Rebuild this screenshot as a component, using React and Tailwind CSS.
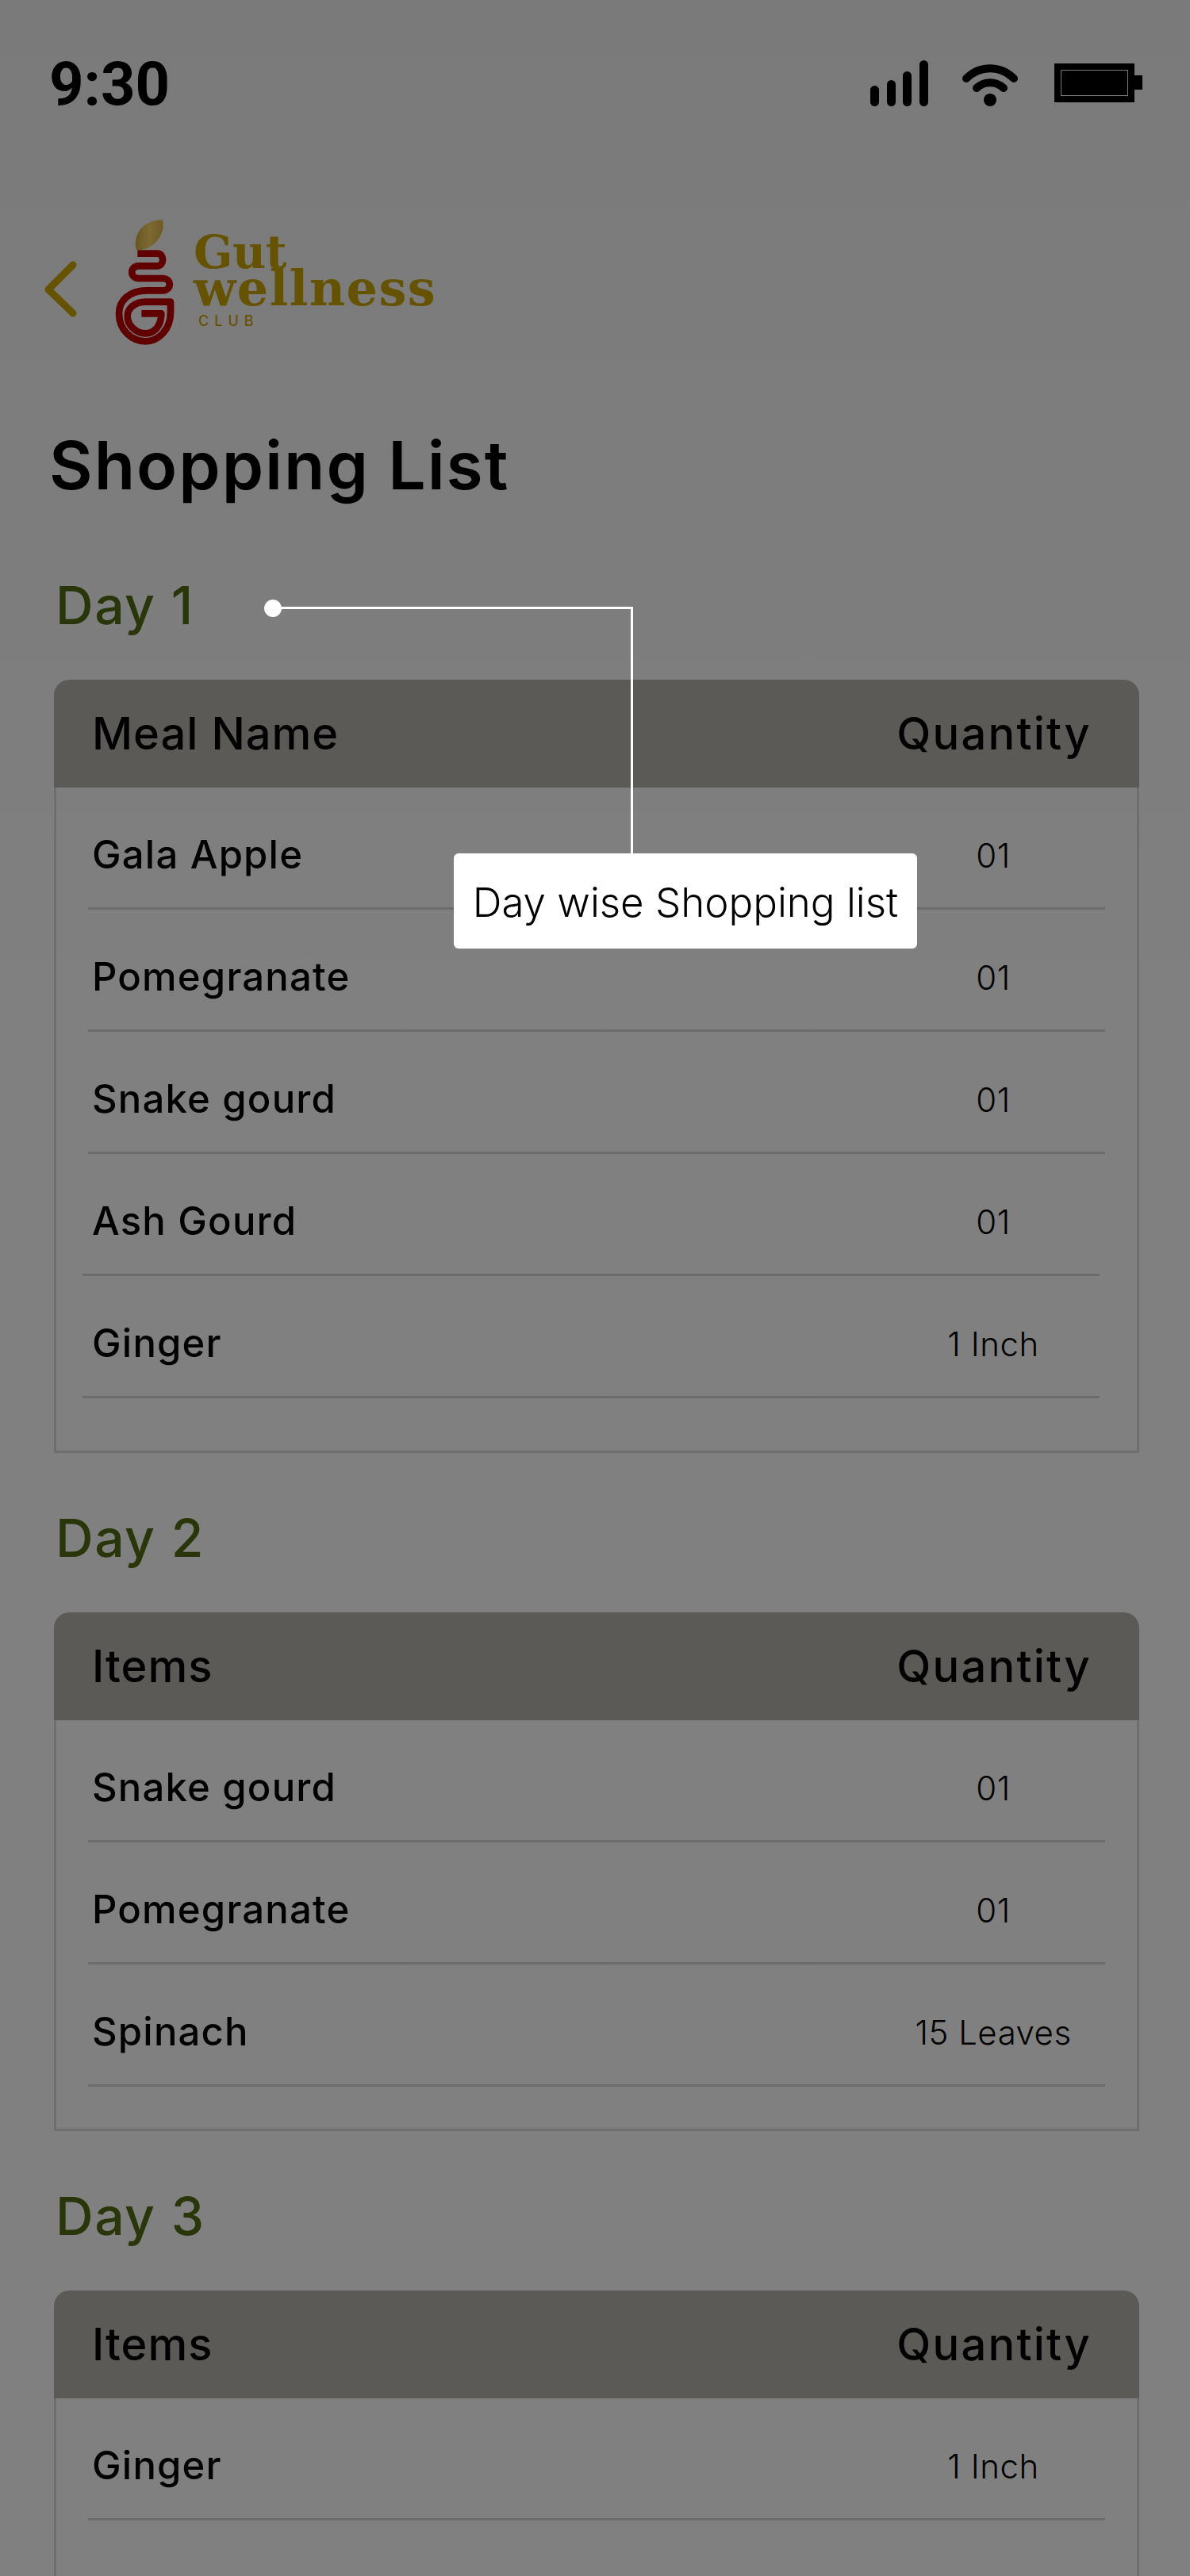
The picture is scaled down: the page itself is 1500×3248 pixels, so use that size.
const days = [
  {
    title: 'Day 1',
    head: 'Meal Name',
    pad: 'pb-[66px]',
    rows: [
      ['Gala Apple', '01'],
      ['Pomegranate', '01'],
      ['Snake gourd', '01'],
      ['Ash Gourd', '01', true],
      ['Ginger', '1 Inch', true],
    ],
  },
  {
    title: 'Day 2',
    head: 'Items',
    pad: 'pb-[53px]',
    rows: [
      ['Snake gourd', '01'],
      ['Pomegranate', '01'],
      ['Spinach', '15 Leaves'],
    ],
  },
  {
    title: 'Day 3',
    head: 'Items',
    pad: 'pb-[53px]',
    rows: [
      ['Ginger', '1 Inch'],
      ['Cucumber', '01', false, true],
    ],
  },
]

function StatusIcons() {
  return (
    <div className="flex items-end gap-[43px] mb-[8px]">
      <svg width="73" height="58" viewBox="0 0 73 58">
        <rect x="0" y="32" width="11" height="26" rx="5.5" />
        <rect x="21" y="25" width="11" height="33" rx="5.5" />
        <rect x="41" y="14" width="11" height="44" rx="5.5" />
        <rect x="62" y="0" width="11" height="58" rx="5.5" />
      </svg>
      <svg width="70" height="54" viewBox="0 0 70 54" fill="none" stroke="#000" strokeLinecap="round">
        <path d="M5 19 C22 2 48 2 65 19" strokeWidth="10" />
        <path d="M18 31 C28 22 42 22 52 31" strokeWidth="10" />
        <circle cx="35" cy="46" r="8" fill="#000" stroke="none" />
      </svg>
      <svg width="111" height="49" viewBox="0 0 111 49" className="mb-[5px] ml-[3px]">
        <path d="M0 0 H101 V15 H111 V33 H101 V49 H0 Z M8 8 V41 H93 V8 Z" fillRule="evenodd" />
        <rect x="9" y="9" width="83" height="31" />
      </svg>
    </div>
  )
}

function Logo() {
  return (
    <div className="flex items-start gap-[24px]">
      <svg width="75" height="158" viewBox="75 50 225 474" fill="none">
        <defs>
          <linearGradient id="leaf" x1="0" y1="0" x2="1" y2="0">
            <stop offset="0" stopColor="#695420" />
            <stop offset="0.5" stopColor="#7c6a32" />
            <stop offset="1" stopColor="#6d5a22" />
          </linearGradient>
        </defs>
        <path d="M255 51 C195 52 150 85 152 150 L156 165 C215 168 268 112 255 51 Z" fill="url(#leaf)" />
        <path
          d="M160 178 H235 C262 178 262 225 235 225 H165 C130 225 130 272 165 272 H255 C290 272 290 318 255 318 H195 C130 318 90 355 90 405 C90 470 140 510 190 510 C240 510 285 465 285 400 V361 H190 C150 361 122 385 122 415 C122 450 155 480 190 480 C225 480 250 450 250 405 H175"
          stroke="#600000"
          strokeWidth="26"
          strokeLinejoin="round"
        />
      </svg>
      <div className="mt-[18px] font-['DejaVu_Serif',serif] font-bold text-[#665300]">
        <div className="text-[58px] leading-[46px] -tracking-[0.5px]">Gut</div>
        <div className="text-[62px] leading-[46px] tracking-[1.5px]">wellness</div>
        <div className="font-['Inter',sans-serif] font-medium text-[18px] leading-[20px] tracking-[7px] ml-[6px] mt-[8px]">CLUB</div>
      </div>
    </div>
  )
}

function DayCard({ day }) {
  return (
    <section>
      <h2 className="text-[66px] leading-[76px] font-medium tracking-[1.5px] pl-[2px] text-[#28360a]">{day.title}</h2>
      <div className={`mt-[56px] border-x-[3px] border-b-[3px] border-[#6e6e6c] rounded-t-[20px] ${day.pad}`}>
        <div className="-mx-[3px] h-[136px] pl-[48px] pr-[60px] flex items-center justify-between bg-[#5b5a57] rounded-t-[20px] text-[56px] font-medium text-black">
          <span className="tracking-[1px]">{day.head}</span>
          <span className="tracking-[2.25px]">Quantity</span>
        </div>
        <div className="mx-[40px]">
          {day.rows.map(([name, qty, shifted, low]) => (
            <div
              key={name}
              className={`h-[154px] flex items-center justify-between border-b-[3px] border-[#6c6c6c] text-black ${low ? 'pt-[28px]' : 'pt-[19px]'} ${shifted ? '-ml-[7px] mr-[7px]' : ''}`}
            >
              <span className={`text-[49px] font-medium tracking-[1.2px] ${shifted ? 'pl-[12px]' : 'pl-[5px]'}`}>{name}</span>
              <span className={`text-center text-[42px] font-light tracking-[0.5px] ${shifted ? 'w-[268px]' : 'w-[282px]'}`}>{qty}</span>
            </div>
          ))}
        </div>
      </div>
    </section>
  )
}

export default function App() {
  return (
    <div className="relative h-[3248px] overflow-hidden bg-linear-to-b from-[#7a7a7a] to-[#808080] to-40% font-['Inter',sans-serif]">
      <div className="flex items-end justify-between pl-[62px] pr-[60px] pt-[70px]">
        <span className="font-['Roboto',sans-serif] font-bold text-[76px] leading-[72px]">9:30</span>
        <StatusIcons />
      </div>

      <div className="mt-[135px] pl-[56px] flex items-center gap-[48px]">
        <svg className="mt-[16px]" width="41" height="71" viewBox="0 0 41 71" fill="none" stroke="#665300" strokeWidth="9" strokeLinecap="round" strokeLinejoin="round">
          <path d="M36 5 L5 36 L36 66" />
        </svg>
        <Logo />
      </div>

      <h1 className="pl-[62px] mt-[104px] text-[84px] leading-[96px] font-semibold tracking-[2px] text-black">Shopping List</h1>

      <div className="mt-[90px] pl-[68px] pr-[64px] flex flex-col gap-[69px]">
        {days.map(day => (
          <DayCard key={day.title} day={day} />
        ))}
      </div>

      {/* callout over the first card */}
      <div className="absolute left-[333px] top-[756px] w-[22px] h-[22px] rounded-full bg-white" />
      <div className="absolute left-[344px] top-[765px] w-[453px] h-[3px] bg-white" />
      <div className="absolute left-[795px] top-[765px] w-[3px] h-[312px] bg-white" />
      <div className="absolute left-[572px] top-[1076px] w-[584px] h-[120px] pt-[4px] rounded-[6px] bg-white flex items-center justify-center text-[51px] font-light text-black whitespace-nowrap">
        Day wise Shopping list
      </div>
    </div>
  )
}
